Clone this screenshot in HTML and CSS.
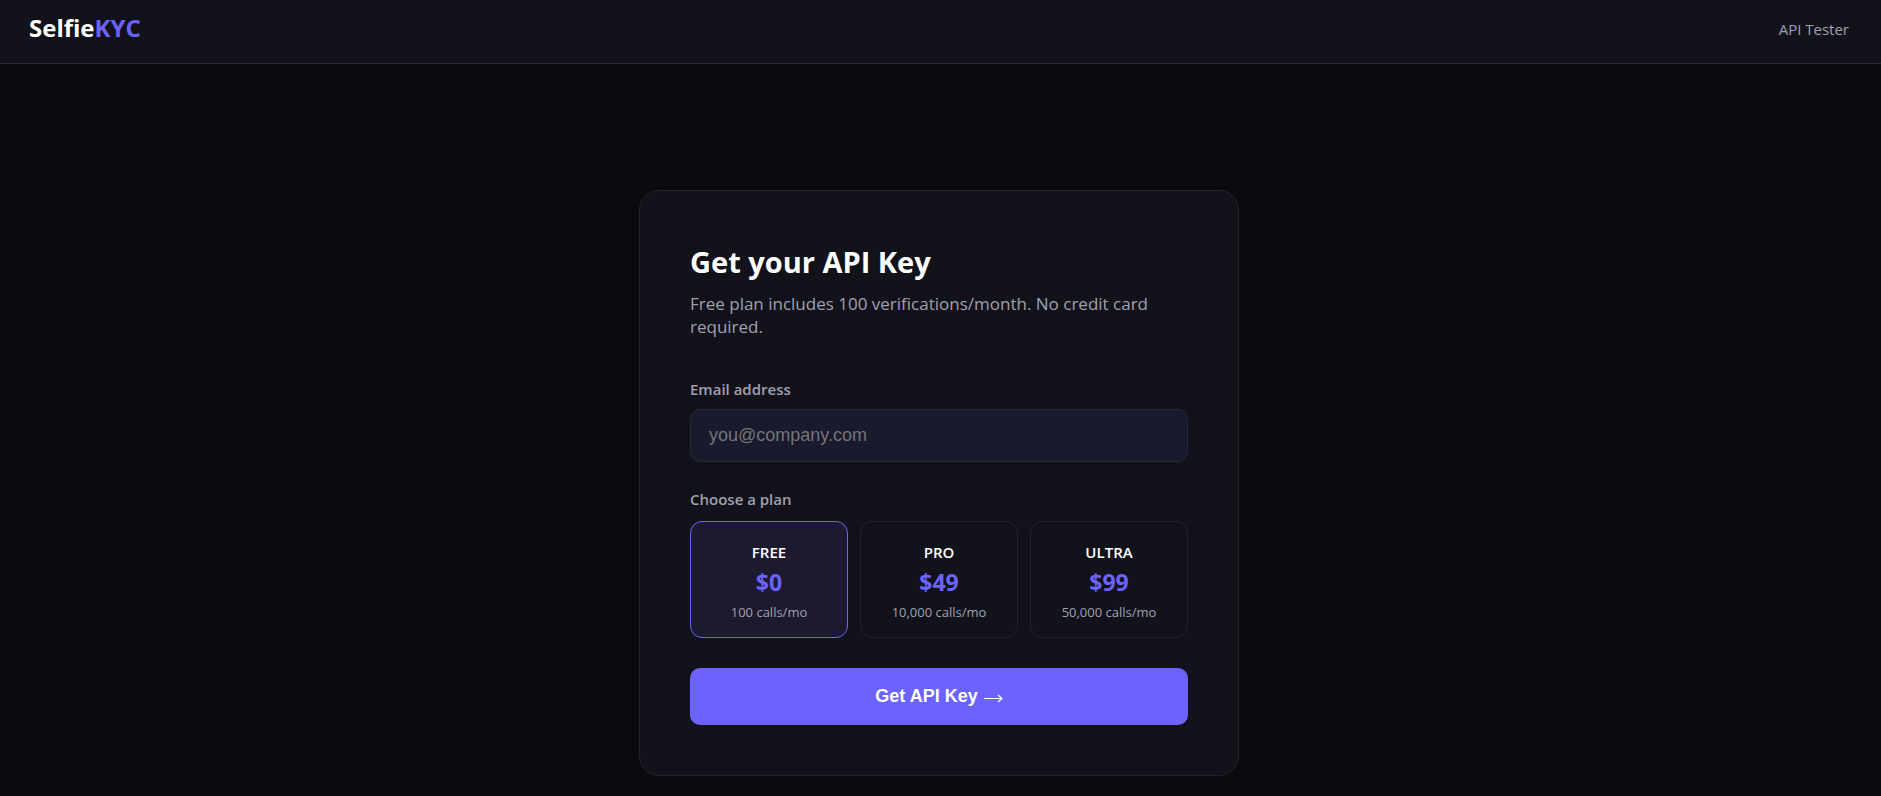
FILE: index.html
```
<!DOCTYPE html>
<html lang="en">
<head>
    <meta charset="UTF-8">
    <meta name="viewport" content="width=device-width, initial-scale=1.0">
    <title>SelfieKYC - Get your API Key</title>
    <link rel="stylesheet" href="styles.css">
</head>
<body>
    <nav>
        <div class="logo">Selfie<span>KYC</span></div>
        <a href="#tester">API Tester</a>
    </nav>

    <main class="container">
        <form class="card">
            <h1>Get your API Key</h1>
            <p class="sub">Free plan includes 100 verifications/month. No credit card required.</p>

            <label class="field-label" for="email">Email address</label>
            <input class="email" type="email" id="email" placeholder="you@company.com">

            <fieldset>
                <legend class="field-label">Choose a plan</legend>
                <div class="plans">
                    <label class="plan">
                        <input type="radio" name="plan" value="free" checked>
                        <span class="plan-name">FREE</span>
                        <span class="plan-price">$0</span>
                        <span class="plan-calls">100 calls/mo</span>
                    </label>
                    <label class="plan">
                        <input type="radio" name="plan" value="pro">
                        <span class="plan-name">PRO</span>
                        <span class="plan-price">$49</span>
                        <span class="plan-calls">10,000 calls/mo</span>
                    </label>
                    <label class="plan">
                        <input type="radio" name="plan" value="ultra">
                        <span class="plan-name">ULTRA</span>
                        <span class="plan-price">$99</span>
                        <span class="plan-calls">50,000 calls/mo</span>
                    </label>
                </div>
            </fieldset>

            <button class="btn" type="button">
                Get API Key
                <svg width="19" height="9" viewBox="0 0 19 9" aria-hidden="true">
                    <path d="M0 4.5H18M14 1L18 4.5L14 8" fill="none" stroke="currentColor" stroke-width="1.2"/>
                </svg>
            </button>
        </form>
    </main>
</body>
</html>
```
FILE: styles.css
```
* {
    margin: 0;
    padding: 0;
    box-sizing: border-box;
}

body {
    background: #0a0a0f;
    color: #fff;
    font-family: "Segoe UI", "Open Sans", sans-serif;
    min-height: 100vh;
}

nav {
    display: flex;
    justify-content: space-between;
    align-items: flex-start;
    padding: 12px 32px 17px 29px;
    background: #12121a;
    border-bottom: 1px solid #2a2a2e;
}

.logo {
    font-size: 24px;
    line-height: 32px;
    font-weight: 700;
}

.logo span {
    color: #6c63ff;
}

nav a {
    color: #a0a0b0;
    text-decoration: none;
    font-size: 15px;
    line-height: 34px;
}

.container {
    display: flex;
    justify-content: center;
    padding: 126px 32px 20px 29px;
}

.card {
    width: 100%;
    max-width: 600px;
    padding: 50px;
    background: #12121a;
    border: 1px solid #232328;
    border-radius: 20px;
}

h1 {
    font-size: 29px;
    line-height: 42px;
    margin-bottom: 9px;
}

.sub {
    color: #a0a0b0;
    font-size: 17px;
    line-height: 23px;
    margin-bottom: 39px;
}

.field-label {
    display: block;
    color: #a0a0b0;
    font-size: 15px;
    line-height: 24px;
    font-weight: 600;
    margin-bottom: 8px;
}

.email {
    display: block;
    width: 100%;
    padding: 15px 18px;
    background: #1a1a2e;
    border: 1px solid #2a2838;
    border-radius: 10px;
    color: #fff;
    font-family: "Liberation Sans", Arial, sans-serif;
    font-size: 18px;
    line-height: 21px;
    margin-bottom: 25px;
}

.email::placeholder {
    color: #757575;
}

fieldset {
    border: none;
    margin-bottom: 30px;
}

legend.field-label {
    margin-bottom: 10px;
}

.plans {
    display: grid;
    grid-template-columns: repeat(3, 1fr);
    gap: 12px;
}

.plan {
    display: flex;
    flex-direction: column;
    align-items: center;
    padding: 19px 8px 14px;
    border: 1px solid #232328;
    border-radius: 12px;
    cursor: pointer;
}

.plan input {
    appearance: none;
}

.plan:has(input:checked) {
    background: #1d1a2f;
    border-color: #6c63ff;
}

.plan-name {
    font-size: 15px;
    line-height: 22px;
    font-weight: 600;
}

.plan-price {
    color: #6c63ff;
    font-size: 23px;
    line-height: 38px;
    font-weight: 700;
}

.plan-calls {
    color: #a0a0b0;
    font-size: 13px;
    line-height: 22px;
}

.btn {
    display: flex;
    justify-content: center;
    align-items: center;
    gap: 6px;
    width: 100%;
    padding: 17px;
    background: #6c63ff;
    border: none;
    border-radius: 10px;
    color: #fff;
    font-family: "Liberation Sans", Arial, sans-serif;
    font-size: 18px;
    line-height: 23px;
    font-weight: 700;
    cursor: pointer;
}

.btn svg {
    margin-top: 3px;
}
```
